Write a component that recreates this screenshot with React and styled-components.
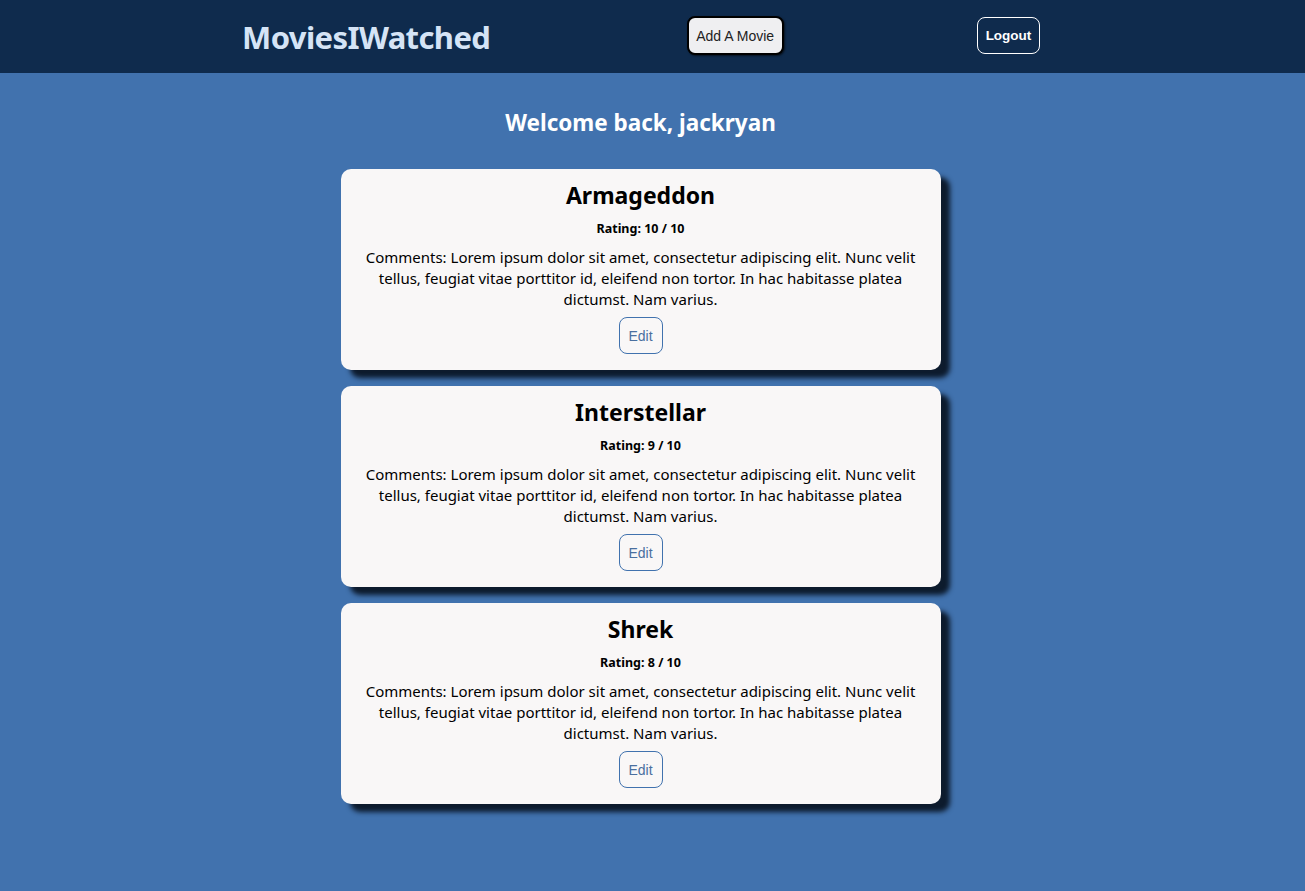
import React from 'react';
import styled, { createGlobalStyle } from 'styled-components';

const GlobalStyle = createGlobalStyle`
  body {
    margin: 0;
    background-color: #4172ae;
    font-family: "Segoe UI", "Noto Sans", sans-serif;
  }
`;

const NavBar = styled.nav`
  height: 73px;
  background-color: #0f2b4d;
  display: flex;
  align-items: center;
  justify-content: space-between;
  padding: 0 265px 0 242px;
  box-sizing: border-box;
`;

const Logo = styled.h1`
  margin: 0;
  font-size: 31px;
  font-weight: 700;
  color: #d5e4f6;
  letter-spacing: -0.6px;
`;

const AddButton = styled.button`
  font-family: Arial, "Liberation Sans", sans-serif;
  font-size: 14px;
  color: #222;
  background-color: #efeff1;
  border: 2px solid #000;
  border-radius: 8px;
  width: 97px;
  height: 39px;
  margin-left: 3px;
  margin-top: -2px;
  box-shadow: 1px 1px 2px rgba(0, 0, 0, 0.6);
`;

const LogoutButton = styled.button`
  font-family: Arial, "Liberation Sans", sans-serif;
  font-size: 13.5px;
  font-weight: 600;
  color: #fff;
  background: transparent;
  border: 1px solid #fff;
  border-radius: 8px;
  width: 63px;
  height: 37px;
  margin-top: -2px;
`;

const Main = styled.main`
  display: flex;
  flex-direction: column;
  align-items: center;
  padding: 0 24px 80px 0;
`;

const Welcome = styled.h2`
  margin: 34px 0 31px;
  font-size: 22.5px;
  font-weight: 700;
  color: #fff;
`;

const CardList = styled.div`
  display: flex;
  flex-direction: column;
  gap: 16px;
`;

const Card = styled.div`
  width: 600px;
  box-sizing: border-box;
  background-color: #f9f7f7;
  border-radius: 10px;
  box-shadow: 9px 8px 5px #0d1b2d;
  padding: 10px 22px 16px;
  display: flex;
  flex-direction: column;
  align-items: center;
  text-align: center;
  color: #000;
`;

const Title = styled.h3`
  margin: 0;
  font-size: 23px;
  font-weight: 700;
  line-height: 32px;
`;

const Rating = styled.p`
  margin: 9px 0 10px;
  font-size: 12.5px;
  font-weight: 700;
`;

const Comments = styled.p`
  margin: 0 0 7px;
  font-size: 15px;
  line-height: 21px;
`;

const EditButton = styled.button`
  font-family: Arial, "Liberation Sans", sans-serif;
  font-size: 14px;
  color: #4a6f9f;
  background: transparent;
  border: 1px solid #4172ae;
  border-radius: 8px;
  width: 44px;
  height: 37px;
`;

const lorem =
  'Comments: Lorem ipsum dolor sit amet, consectetur adipiscing elit. Nunc velit tellus, feugiat vitae porttitor id, eleifend non tortor. In hac habitasse platea dictumst. Nam varius.';

const movies = [
  { id: 1, name: 'Armageddon', rating: 10 },
  { id: 2, name: 'Interstellar', rating: 9 },
  { id: 3, name: 'Shrek', rating: 8 },
];

const App = () => {
  return (
    <>
      <GlobalStyle />
      <NavBar>
        <Logo>MoviesIWatched</Logo>
        <AddButton>Add A Movie</AddButton>
        <LogoutButton>Logout</LogoutButton>
      </NavBar>
      <Main>
        <Welcome>Welcome back, jackryan</Welcome>
        <CardList>
          {movies.map(movie => (
            <Card key={movie.id}>
              <Title>{movie.name}</Title>
              <Rating>Rating: {movie.rating} / 10</Rating>
              <Comments>{lorem}</Comments>
              <EditButton>Edit</EditButton>
            </Card>
          ))}
        </CardList>
      </Main>
    </>
  );
};

export default App;
